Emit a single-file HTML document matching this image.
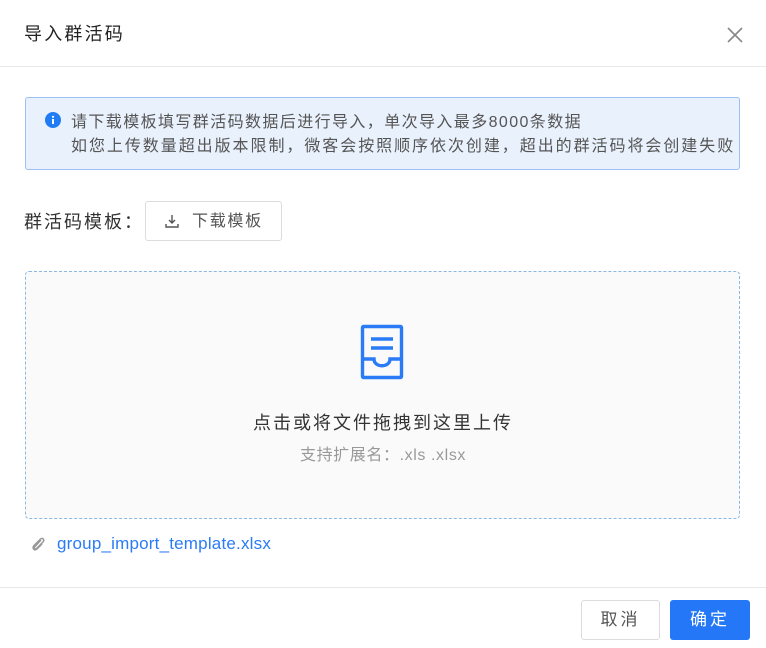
<!DOCTYPE html>
<html><head><meta charset="utf-8"><style>
*{box-sizing:border-box;margin:0;padding:0}
body{width:766px;height:648px;background:#fff;font-family:"Liberation Sans","Noto Sans CJK SC",sans-serif;color:#333;position:relative;overflow:hidden}
.abs{position:absolute;white-space:nowrap}
</style></head><body>
<div class="abs" style="left:24px;top:22px;font-size:18px;color:#222;line-height:24px;letter-spacing:2.2px">导入群活码</div>
<svg class="abs" style="left:727px;top:27px" width="16" height="16" viewBox="0 0 16 16"><path d="M1 1L15 15M15 1L1 15" stroke="#888" stroke-width="1.6"/></svg>
<div class="abs" style="left:0;top:66px;width:766px;height:1px;background:#e8e8e8"></div>

<div class="abs" style="left:25px;top:97px;width:715px;height:73px;background:#e9f1fd;border:1px solid #9dbff5;border-radius:3px"></div>
<svg class="abs" style="left:45px;top:112px" width="16" height="16" viewBox="0 0 16 16"><circle cx="8" cy="8" r="8" fill="#1f7cf4"/><rect x="7" y="7" width="2" height="5" fill="#fff"/><circle cx="8" cy="4.8" r="1.1" fill="#fff"/></svg>
<div class="abs" style="left:71px;top:111px;font-size:16px;line-height:24px;color:#555;letter-spacing:1.4px">请下载模板填写群活码数据后进行导入，单次导入最多8000条数据</div>
<div class="abs" style="left:71px;top:135px;font-size:16px;line-height:24px;color:#555;letter-spacing:1.95px">如您上传数量超出版本限制，微客会按照顺序依次创建，超出的群活码将会创建失败</div>

<div class="abs" style="left:24px;top:209px;font-size:18px;line-height:26px;color:#333;letter-spacing:2px">群活码模板：</div>
<div class="abs" style="left:145px;top:201px;width:137px;height:40px;border:1px solid #dcdcdc;border-radius:3px"></div>
<svg class="abs" style="left:164px;top:213px" width="16" height="16" viewBox="0 0 16 16" fill="none" stroke="#555" stroke-width="1.4"><path d="M8 2V10M5 7L8 10L11 7M2 11V14H14V11"/></svg>
<div class="abs" style="left:192px;top:211px;font-size:16px;line-height:22px;color:#555;letter-spacing:1.7px">下载模板</div>

<div class="abs" style="left:25px;top:271px;width:715px;height:248px;background:#fafafa;border:1px dashed #8ab8e4;border-radius:4px"></div>
<svg class="abs" style="left:360px;top:324px" width="44" height="56" viewBox="0 0 44 56" fill="none" stroke="#2a7bf6" stroke-width="3.4"><rect x="2.5" y="2.5" width="39" height="51" rx="1"/><path d="M11 15H33M11 24H33M2.5 35H14C14 44 30 44 30 35H41.5"/></svg>
<div class="abs" style="left:0;top:410px;width:766px;text-align:center;font-size:18px;line-height:26px;color:#333;letter-spacing:2px">点击或将文件拖拽到这里上传</div>
<div class="abs" style="left:0;top:445px;width:766px;text-align:center;font-size:16px;line-height:22px;color:#999;letter-spacing:0.6px">支持扩展名：.xls .xlsx</div>

<svg class="abs" style="left:30px;top:535px" width="16" height="18" viewBox="0 0 16 18" fill="none" stroke="#999" stroke-width="1.5"><path d="M11 5L5 11.5C3.5 13 5 15 6.5 13.5L13 7C15 5 12.5 2 10.5 4L4 10.5C1.5 13 4.5 16.5 7 14L12 9"/></svg>
<div class="abs" style="left:57px;top:533px;font-size:17px;line-height:22px;color:#2a7bf6;letter-spacing:0.2px">group_import_template.xlsx</div>

<div class="abs" style="left:0;top:587px;width:766px;height:1px;background:#e8e8e8"></div>
<div class="abs" style="left:581px;top:600px;width:79px;height:40px;border:1px solid #dcdcdc;border-radius:3px;text-align:center;line-height:38px;font-size:17px;color:#555;letter-spacing:3px">取消</div>
<div class="abs" style="left:670px;top:600px;width:80px;height:40px;background:#2478f8;border-radius:3px;text-align:center;line-height:40px;font-size:17px;color:#fff;letter-spacing:3px">确定</div>
</body></html>
